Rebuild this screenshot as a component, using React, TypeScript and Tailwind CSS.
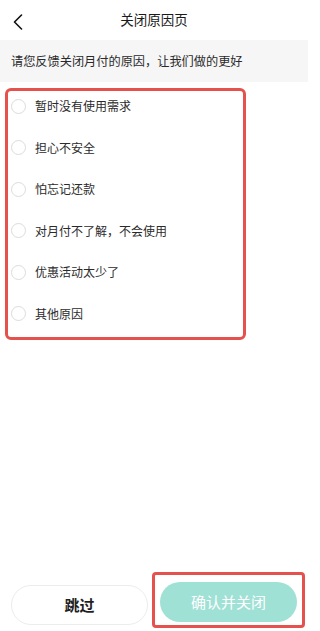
import { useState } from 'react';

const reasons = [
  '暂时没有使用需求',
  '担心不安全',
  '怕忘记还款',
  '对月付不了解，不会使用',
  '优惠活动太少了',
  '其他原因',
];

const font = { fontFamily: '"Noto Sans CJK SC", "Noto Sans", sans-serif' };

export default function App() {
  const [picked, setPicked] = useState<number | null>(null);

  return (
    <div className="flex h-[631px] w-[308px] flex-col bg-white text-[#222]" style={font}>
      {/* header */}
      <div className="relative flex h-[40px] shrink-0 items-center justify-center">
        <button type="button" className="absolute left-[9px] top-[10px] p-1" aria-label="返回">
          <svg width="12" height="16" viewBox="0 0 12 16" fill="none">
            <path d="M8.5 1L1.5 8L8.5 15" stroke="#111" strokeWidth="1.6" strokeLinecap="round" strokeLinejoin="round" />
          </svg>
        </button>
        <h1 className="text-[13.5px] leading-none text-[#1a1a1a]">关闭原因页</h1>
      </div>

      <div className="flex h-[42px] shrink-0 items-center bg-[#f6f6f7] px-[11px]">
        <p className="text-[12.2px] leading-none text-[#2a2a2a]">请您反馈关闭月付的原因，让我们做的更好</p>
      </div>

      <div className="mt-[6px] ml-[5px] w-[241px] rounded-[6px] border-[3px] border-[#e5514c] pb-[8px]">
        <ul className="flex flex-col gap-[11.6px]">
          {reasons.map((reason, i) => (
            <li key={reason}>
              <button
                type="button"
                onClick={() => setPicked(i)}
                className="flex h-[30px] w-full items-center gap-[9px] pl-[3px] text-left"
              >
                <span className="flex h-[15px] w-[15px] shrink-0 items-center justify-center rounded-full border border-[#dcdcdc] bg-white">
                  {picked === i && <span className="h-[7px] w-[7px] rounded-full bg-[#5fcfbd]" />}
                </span>
                <span className="text-[12px] leading-none text-[#2b2b2b]">{reason}</span>
              </button>
            </li>
          ))}
        </ul>
      </div>

      {/* bottom actions */}
      <div className="mt-auto mb-[3px] flex items-end pl-[11px]">
        <button
          type="button"
          className="mb-[3px] h-[40px] w-[137px] rounded-full border border-[#ececec] bg-white text-[15px] font-bold text-[#1f1f1f]"
        >
          跳过
        </button>
        <div className="ml-[4px] rounded-[4px] border-[3px] border-[#e5514c] px-[5px] pt-[7px] pb-[3px]">
          <button
            type="button"
            className="h-[40px] w-[137px] rounded-full bg-[#a0e1d6] text-[15px] text-white"
          >
            确认并关闭
          </button>
        </div>
      </div>
    </div>
  );
}
